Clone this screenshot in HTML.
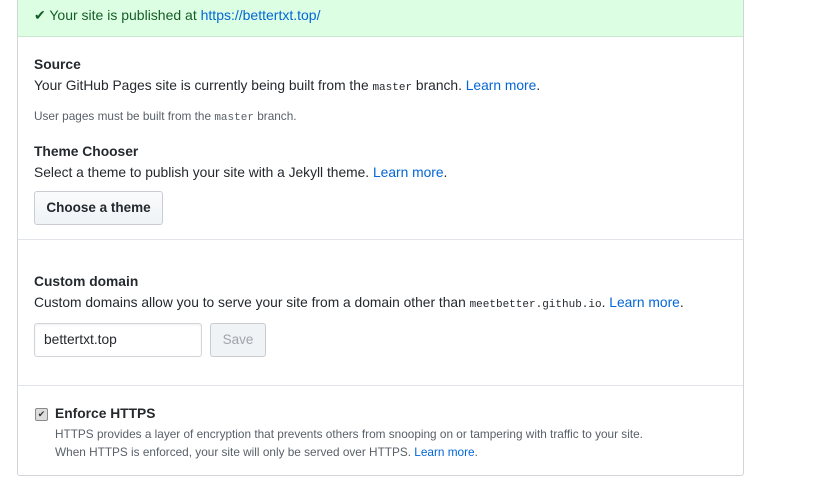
<!DOCTYPE html>
<html><head><style>
body{margin:0;background:#fff;font-family:"Liberation Sans",sans-serif;color:#24292e;width:825px;height:494px;overflow:hidden;position:relative}
.box{position:absolute;left:17px;top:-5px;width:725px;height:479px;border:1px solid #d1d5da;border-radius:3px;overflow:hidden}
.flash{height:41px;background:#dcffe4;border-bottom:1px solid #c7e9cf;box-sizing:border-box;position:relative}
.flash span{position:absolute;left:16px;top:11px;font-size:14px;color:#165c26}
a{color:#0366d6;text-decoration:none}
.t{position:absolute;font-size:13.8px;white-space:nowrap}
.b{font-weight:bold;font-size:13.8px}
.s{font-size:11.8px;color:#586069}
code{font-family:"Liberation Mono",monospace;font-size:11px}
.hr{position:absolute;left:0;width:725px;border-top:1px solid #e1e4e8}
.btn{position:absolute;border:1px solid #c9ccd1;border-radius:3px;background:linear-gradient(#fafbfc,#eff3f6);font-weight:bold;font-size:13.5px;box-sizing:border-box;text-align:center}
</style></head><body>
<div class="box">
<div class="flash"><span><span style="position:static">&#10004;</span> Your site is published at <a href="#">https://bettertxt.top/</a></span></div>
<div class="t b" style="left:16px;top:61px">Source</div>
<div class="t" style="left:16px;top:82px">Your GitHub Pages site is currently being built from the <code>master</code> branch. <a href="#">Learn more</a>.</div>
<div class="t s" style="left:16px;top:113px">User pages must be built from the <code>master</code> branch.</div>
<div class="t b" style="left:16px;top:148px">Theme Chooser</div>
<div class="t" style="left:16px;top:169px">Select a theme to publish your site with a Jekyll theme. <a href="#">Learn more</a>.</div>
<div class="btn" style="left:16px;top:195px;width:129px;height:34px;line-height:32px">Choose a theme</div>
<div class="hr" style="top:243px"></div>
<div class="t b" style="left:16px;top:278px">Custom domain</div>
<div class="t" style="left:16px;top:299px">Custom domains allow you to serve your site from a domain other than <code>meetbetter.github.io</code>. <a href="#">Learn more</a>.</div>
<div style="position:absolute;left:16px;top:327px;width:168px;height:34px;border:1px solid #d1d5da;border-radius:3px;box-sizing:border-box;font-size:13.8px;line-height:32px;padding-left:9px;box-shadow:inset 0 1px 2px rgba(27,31,35,.075)">bettertxt.top</div>
<div class="btn" style="left:192px;top:327px;width:56px;height:34px;line-height:32px;color:#a0a5ab;font-weight:normal;background:#eff3f6">Save</div>
<div class="hr" style="top:389px"></div>
<div style="position:absolute;left:17px;top:412px;width:11px;height:11px;border:1px solid #8a8a8a;border-radius:2px;background:#ddd;font-size:9px;line-height:11px;text-align:center;color:#333">&#10004;</div>
<div class="t b" style="left:37px;top:410px">Enforce HTTPS</div>
<div class="t s" style="left:37px;top:431px">HTTPS provides a layer of encryption that prevents others from snooping on or tampering with traffic to your site.</div>
<div class="t s" style="left:37px;top:449px">When HTTPS is enforced, your site will only be served over HTTPS. <a href="#">Learn more</a>.</div>
</div>
</body></html>
